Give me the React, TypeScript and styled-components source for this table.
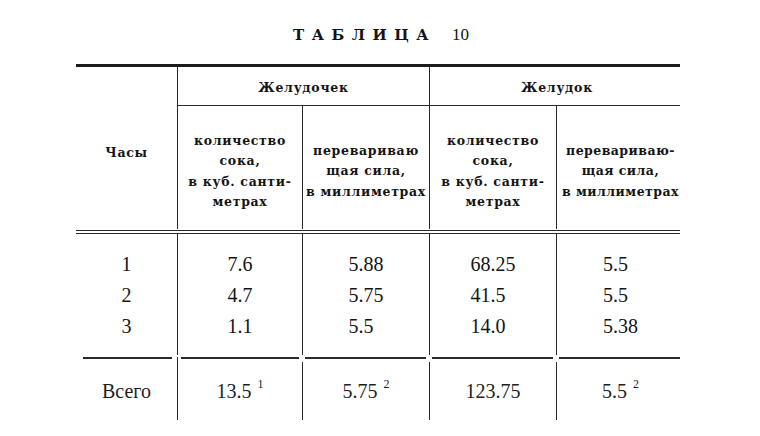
import React from 'react';
import styled, { createGlobalStyle } from 'styled-components';

const Global = createGlobalStyle`
  html, body { margin: 0; padding: 0; background: #fff; }
  body { width: 760px; height: 436px; overflow: hidden; color: #141414; }
`;

const Page = styled.div`
  display: flex;
  flex-direction: column;
  align-items: center;
  padding-top: 25px;
`;

const Title = styled.h1`
  margin: 0 0 0 2px;
  height: 20px;
  line-height: 20px;
  display: flex;
  align-items: baseline;
  gap: 16px;
  font-family: "DejaVu Serif", serif;
  font-size: 15px;
  font-weight: 700;
`;

const Spaced = styled.span`
  letter-spacing: 7.5px;
`;

const TitleNum = styled.span`
  font-family: "Liberation Serif", serif;
  font-weight: 400;
  font-size: 17px;
`;

const Clip = styled.div`
  width: 604px;
  margin-top: 19px;
  margin-right: 4px;
  overflow: hidden;
`;

const Table = styled.div`
  display: grid;
  grid-template-columns: 101px 125px 127px 127px 128px;
  grid-template-rows: 39px 123px 5px 123px 63px;
  width: 608px;
  border-top: 3px solid #1b1b1b;
`;

const headFont = `
  font-family: "DejaVu Serif", serif;
  font-weight: 700;
  font-size: 12.5px;
  letter-spacing: 0.7px;
`;

const HoursHead = styled.div`
  ${headFont}
  grid-row: 1 / 3;
  display: flex;
  align-items: center;
  justify-content: center;
  padding-top: 8px;
`;

const GroupHead = styled.div`
  ${headFont}
  grid-column: span 2;
  display: flex;
  align-items: center;
  justify-content: center;
  border-left: 1px solid #2a2a2a;
  border-bottom: 1px solid #2a2a2a;
  padding-top: 2px;
`;

const SubHead = styled.div<{ $tight?: boolean }>`
  ${headFont}
  display: flex;
  flex-direction: column;
  align-items: center;
  justify-content: center;
  text-align: center;
  line-height: 20.5px;
  white-space: nowrap;
  padding-top: 8px;
  border-left: 1px solid #2a2a2a;
  letter-spacing: ${(p) => (p.$tight ? '0.45px' : '0.7px')};
`;

const DoubleRule = styled.div`
  grid-column: 1 / -1;
  border-top: 4px double #2a2a2a;
  margin-top: 1px;
`;

const DataCell = styled.div<{ $divided?: boolean }>`
  display: flex;
  align-items: center;
  justify-content: center;
  border-left: ${(p) => (p.$divided ? '1px solid #2a2a2a' : 'none')};
  margin-bottom: 2px;
`;

const Stack = styled.div`
  display: flex;
  flex-direction: column;
  align-items: flex-start;
  font-family: "Liberation Serif", serif;
  font-size: 20px;
  line-height: 31px;
  padding-top: 2px;
`;

const TotalCell = styled.div<{ $divided?: boolean }>`
  display: flex;
  flex-direction: column;
  border-left: ${(p) => (p.$divided ? '1px solid #2a2a2a' : 'none')};
`;

const Rule = styled.div<{ $first?: boolean }>`
  height: 0;
  border-top: 2px solid #2a2a2a;
  margin: ${(p) => (p.$first ? '0 5px 0 7px' : '0 3px')};
`;

const TotalBody = styled.div<{ $divided?: boolean }>`
  flex: 1;
  display: flex;
  align-items: center;
  justify-content: center;
  margin-top: 3px;
  border-left: ${(p) => (p.$divided ? '1px solid #2a2a2a' : 'none')};
  font-family: "Liberation Serif", serif;
  font-size: 20px;
  color: #1e1e1e;
`;

const Sup = styled.span`
  font-size: 12px;
  margin-left: 6px;
  position: relative;
  top: -7px;
`;

const volumeHead = ['количество', 'сока,', 'в куб. санти-', 'метрах'];

const data: string[][] = [
  ['1', '2', '3'],
  ['7.6', '4.7', '1.1'],
  ['5.88', '5.75', '5.5'],
  ['68.25', '41.5', '14.0'],
  ['5.5', '5.5', '5.38'],
];

const totals: { v: string; sup?: string }[] = [
  { v: 'Всего' },
  { v: '13.5', sup: '1' },
  { v: '5.75', sup: '2' },
  { v: '123.75' },
  { v: '5.5', sup: '2' },
];

const Lines = ({ lines }: { lines: string[] }) => (
  <>
    {lines.map((l, i) => (
      <span key={i}>{l}</span>
    ))}
  </>
);

export default function App() {
  return (
    <>
      <Global />
      <Page>
        <Title>
          <Spaced>ТАБЛИЦА</Spaced>
          <TitleNum>10</TitleNum>
        </Title>
        <Clip>
          <Table>
            <HoursHead>Часы</HoursHead>
            <GroupHead>Желудочек</GroupHead>
            <GroupHead>Желудок</GroupHead>
            <SubHead>
              <Lines lines={volumeHead} />
            </SubHead>
            <SubHead>
              <Lines lines={['переваривaю', 'щая сила,', 'в миллиметрах']} />
            </SubHead>
            <SubHead>
              <Lines lines={volumeHead} />
            </SubHead>
            <SubHead $tight>
              <Lines lines={['переваривaю-', 'щая сила,', 'в миллиметрах']} />
            </SubHead>
            <DoubleRule />
            {data.map((col, i) => (
              <DataCell key={i} $divided={i > 0}>
                <Stack>
                  {col.map((v, j) => (
                    <span key={j}>{v}</span>
                  ))}
                </Stack>
              </DataCell>
            ))}
            {totals.map((t, i) => (
              <TotalCell key={i} $divided={i === 1}>
                <Rule $first={i === 0} />
                <TotalBody $divided={i > 1}>
                  {t.v}
                  {t.sup && <Sup>{t.sup}</Sup>}
                </TotalBody>
              </TotalCell>
            ))}
          </Table>
        </Clip>
      </Page>
    </>
  );
}
